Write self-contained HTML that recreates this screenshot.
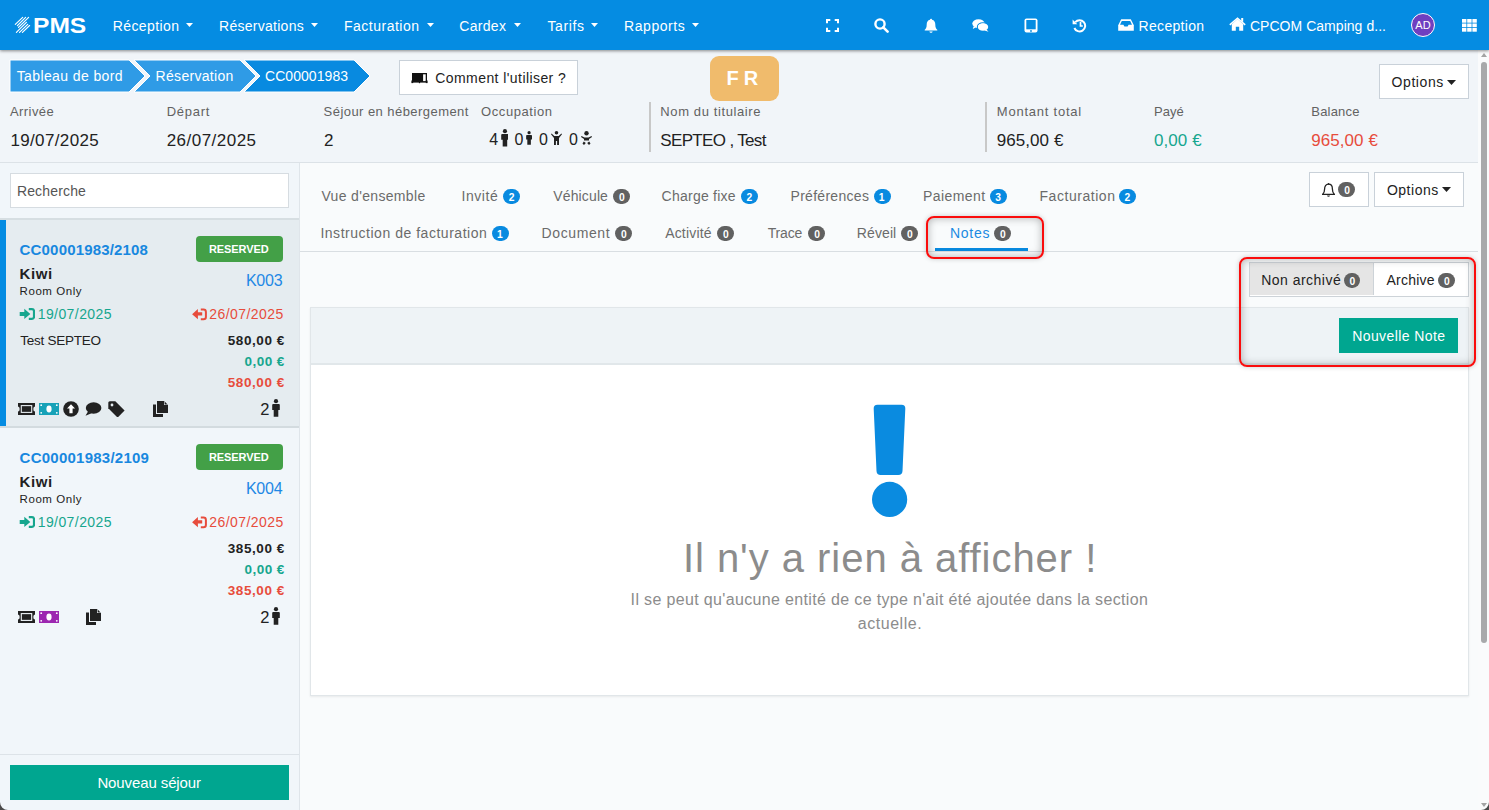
<!DOCTYPE html>
<html><head><meta charset="utf-8"><title>PMS</title>
<style>
html,body{margin:0;padding:0;}
body{width:1489px;height:810px;overflow:hidden;position:relative;background:#f1f5f9;font-family:"Liberation Sans", sans-serif;}
.t{position:absolute;white-space:nowrap;line-height:100px;z-index:4;}
svg{display:block;}
</style></head><body>
<div style="position:absolute;left:0px;top:50px;width:1478px;height:113px;background:#f1f5f9;"></div>
<div style="position:absolute;left:0px;top:162px;width:1478px;height:1px;background:#dce2e7;"></div>
<div style="position:absolute;left:0px;top:163px;width:299px;height:647px;background:#f1f6fa;"></div>
<div style="position:absolute;left:299px;top:163px;width:1px;height:647px;background:#dfe5ea;"></div>
<div style="position:absolute;left:300px;top:163px;width:1178px;height:647px;background:#f9fbfc;"></div>
<div style="position:absolute;left:1478px;top:50px;width:11px;height:760px;background:#fafbfc;"></div>
<div style="position:absolute;left:1481px;top:62px;width:6px;height:581px;background:#a8a9ab;border-radius:3px;"></div>
<svg style="position:absolute;left:1480px;top:52px;" width="8" height="6" viewBox="0 0 8 6"><path d="M1 5 L4 1 L7 5 Z" fill="#a3a3a3"/></svg>
<svg style="position:absolute;left:1480px;top:802px;" width="8" height="6" viewBox="0 0 8 6"><path d="M1 1 L4 5 L7 1 Z" fill="#a3a3a3"/></svg>
<div style="position:absolute;left:0px;top:0px;width:1489px;height:50px;background:#058ce2;box-shadow:0 1px 3px rgba(0,0,0,.45);z-index:2;"></div>
<svg style="position:absolute;left:14px;top:16px;z-index:3;" width="17" height="18" viewBox="0 0 17 18"><g stroke="#fff" stroke-width="1.15" stroke-linecap="round" fill="none"><path d="M1.30 8.40 L8.70 1.30"/><path d="M3.40 9.60 L11.60 1.30"/><path d="M4.50 11.40 L14.60 1.30"/><path d="M2.40 16.40 L12.40 6.40"/><path d="M5.50 16.40 L13.70 8.40"/><path d="M8.40 16.40 L15.60 9.50"/></g></svg>
<div class="t" style="left:32.98px;top:-24.10px;font-size:22px;color:#fff;font-weight:700;letter-spacing:0px;transform:scaleX(1.1174);transform-origin:0 0;">PMS</div>
<div class="t" style="left:112.70px;top:-24.20px;font-size:14px;color:#fff;font-weight:400;letter-spacing:0.412px;">Réception</div>
<svg style="position:absolute;left:185.5px;top:23px;z-index:3;" width="7" height="4" viewBox="0 0 7 4"><path d="M0 0 L7 0 L3.5 4 Z" fill="#fff"/></svg>
<div class="t" style="left:219.00px;top:-24.20px;font-size:14px;color:#fff;font-weight:400;letter-spacing:0.273px;">Réservations</div>
<svg style="position:absolute;left:310.8px;top:23px;z-index:3;" width="7" height="4" viewBox="0 0 7 4"><path d="M0 0 L7 0 L3.5 4 Z" fill="#fff"/></svg>
<div class="t" style="left:344.00px;top:-24.20px;font-size:14px;color:#fff;font-weight:400;letter-spacing:0.5px;">Facturation</div>
<svg style="position:absolute;left:426.5px;top:23px;z-index:3;" width="7" height="4" viewBox="0 0 7 4"><path d="M0 0 L7 0 L3.5 4 Z" fill="#fff"/></svg>
<div class="t" style="left:459.30px;top:-24.20px;font-size:14px;color:#fff;font-weight:400;letter-spacing:0.3px;">Cardex</div>
<svg style="position:absolute;left:513.5px;top:23px;z-index:3;" width="7" height="4" viewBox="0 0 7 4"><path d="M0 0 L7 0 L3.5 4 Z" fill="#fff"/></svg>
<div class="t" style="left:547.40px;top:-24.20px;font-size:14px;color:#fff;font-weight:400;letter-spacing:0.64px;">Tarifs</div>
<svg style="position:absolute;left:591.4px;top:23px;z-index:3;" width="7" height="4" viewBox="0 0 7 4"><path d="M0 0 L7 0 L3.5 4 Z" fill="#fff"/></svg>
<div class="t" style="left:624.00px;top:-24.20px;font-size:14px;color:#fff;font-weight:400;letter-spacing:0.571px;">Rapports</div>
<svg style="position:absolute;left:692px;top:23px;z-index:3;" width="7" height="4" viewBox="0 0 7 4"><path d="M0 0 L7 0 L3.5 4 Z" fill="#fff"/></svg>
<svg style="position:absolute;left:826px;top:19px;z-index:3;" width="13" height="13" viewBox="0 0 13 13"><path d="M1 4.3V1H4.3M8.7 1H12V4.3M12 8.7V12H8.7M4.3 12H1V8.7" stroke="#fff" stroke-width="2" fill="none"/></svg>
<svg style="position:absolute;left:874px;top:18px;z-index:3;" width="15" height="15" viewBox="0 0 15 15"><circle cx="6" cy="6" r="4.6" stroke="#fff" stroke-width="2.4" fill="none"/><path d="M9.3 9.3 L13.6 13.6" stroke="#fff" stroke-width="2.6" stroke-linecap="round"/></svg>
<svg style="position:absolute;left:924px;top:18px;z-index:3;" width="14" height="15" viewBox="0 0 14 15"><path d="M7 0.8C7.6 0.8 8 1.2 8 1.7C10.3 2.2 11.3 4 11.3 6.5C11.3 9.5 12 10.6 13.3 11.8V12.6H0.7V11.8C2 10.6 2.7 9.5 2.7 6.5C2.7 4 3.7 2.2 6 1.7C6 1.2 6.4 0.8 7 0.8Z" fill="#fff"/><path d="M5.3 13.4H8.7C8.5 14.3 7.8 14.8 7 14.8C6.2 14.8 5.5 14.3 5.3 13.4Z" fill="#fff"/></svg>
<svg style="position:absolute;left:972px;top:19px;z-index:3;" width="17" height="13" viewBox="0 0 17 13"><ellipse cx="6.5" cy="4.6" rx="6.2" ry="4.4" fill="#fff"/><path d="M1.5 7.5 L0.8 10 L4 8.3Z" fill="#fff"/><ellipse cx="11" cy="8" rx="5.6" ry="4.1" fill="none" stroke="#058ce2" stroke-width="1.2"/><ellipse cx="11" cy="8" rx="5.2" ry="3.8" fill="#fff"/><path d="M14.5 10.5 L16.5 12.8 L12.5 11.6Z" fill="#fff"/></svg>
<svg style="position:absolute;left:1024px;top:18px;z-index:3;" width="14" height="15" viewBox="0 0 14 15"><rect x="0.5" y="0.5" width="13" height="14" rx="2" fill="#fff"/><rect x="2.3" y="2" width="9.4" height="9.3" fill="#058ce2"/><circle cx="7" cy="13" r="0.9" fill="#058ce2"/></svg>
<svg style="position:absolute;left:1072px;top:18px;z-index:3;" width="15" height="15" viewBox="0 0 15 15"><path d="M3.3 4.2 A5.6 5.6 0 1 1 2.4 10" stroke="#fff" stroke-width="2" fill="none"/><path d="M0.6 1.5 L0.6 6.2 L5.3 6.2Z" fill="#fff"/><path d="M8.5 4 V8 H10.8" stroke="#fff" stroke-width="1.7" fill="none"/></svg>
<svg style="position:absolute;left:1118px;top:19px;z-index:3;" width="16" height="12" viewBox="0 0 16 12"><path d="M3.2 0.3H12.8L15.8 6.3V11.7H0.2V6.3Z" fill="#fff"/><path d="M3.8 1.9H12.2L14 5.8H10.6L9.6 7.6H6.4L5.4 5.8H2Z" fill="#058ce2"/></svg>
<div class="t" style="left:1138.60px;top:-24.20px;font-size:14px;color:#fff;font-weight:400;letter-spacing:0.3px;">Reception</div>
<svg style="position:absolute;left:1229px;top:17px;z-index:3;" width="17" height="14" viewBox="0 0 17 14"><path d="M8.5 2 L14.2 7.2 V13.8 H10.2 V9.8 H6.8 V13.8 H2.8 V7.2Z" fill="#fff"/><path d="M0.8 7.8 L8.5 1.2 L16.2 7.8" stroke="#fff" stroke-width="1.6" fill="none"/><rect x="12.2" y="1" width="2" height="3.8" fill="#fff"/></svg>
<div class="t" style="left:1249.90px;top:-24.10px;font-size:14px;color:#fff;font-weight:400;letter-spacing:0.041px;">CPCOM Camping d...</div>
<div style="position:absolute;z-index:3;left:1411px;top:13px;width:22px;height:22px;border:1.5px solid #fff;border-radius:50%;background:#6f3fc0;color:#fff;font-size:11px;line-height:22px;text-align:center;">AD</div>
<svg style="position:absolute;left:1462px;top:19px;z-index:3;" width="15" height="13" viewBox="0 0 15 13"><rect x="0.0" y="0.0" width="4.4" height="3.7" fill="#fff"/><rect x="5.2" y="0.0" width="4.4" height="3.7" fill="#fff"/><rect x="10.4" y="0.0" width="4.4" height="3.7" fill="#fff"/><rect x="0.0" y="4.5" width="4.4" height="3.7" fill="#fff"/><rect x="5.2" y="4.5" width="4.4" height="3.7" fill="#fff"/><rect x="10.4" y="4.5" width="4.4" height="3.7" fill="#fff"/><rect x="0.0" y="9.0" width="4.4" height="3.7" fill="#fff"/><rect x="5.2" y="9.0" width="4.4" height="3.7" fill="#fff"/><rect x="10.4" y="9.0" width="4.4" height="3.7" fill="#fff"/></svg>
<svg style="position:absolute;left:8px;top:58px;" width="366" height="36" viewBox="0 0 366 36"><g transform="translate(-8,-58)"><path d="M10 60 H129 L145 76 L129 92 H10 Z" fill="#2f9be6" stroke="#fff" stroke-width="1"/><path d="M134 60 H240 L256 76 L240 92 H134 L150 76 Z" fill="#2f9be6" stroke="#fff" stroke-width="1"/><path d="M244 60 H354 L370 76 L354 92 H244 L260 76 Z" fill="#088ae0" stroke="#fff" stroke-width="1"/></g></svg>
<div class="t" style="left:16.70px;top:26.10px;font-size:14px;color:#fff;font-weight:400;letter-spacing:0.393px;">Tableau de bord</div>
<div class="t" style="left:155.60px;top:26.10px;font-size:14px;color:#fff;font-weight:400;letter-spacing:0.3px;">Réservation</div>
<div class="t" style="left:265.00px;top:26.10px;font-size:14px;color:#fff;font-weight:400;letter-spacing:0.056px;">CC00001983</div>
<div style="position:absolute;left:399px;top:60px;width:177px;height:33px;background:#fff;border:1px solid #c9d1d9;"></div>
<svg style="position:absolute;left:411px;top:72px;" width="17" height="12" viewBox="0 0 17 12"><rect x="1" y="1" width="15" height="9.6" fill="#111"/><rect x="12.1" y="2.3" width="2.6" height="6.8" fill="#fff"/><rect x="0.4" y="8.5" width="1.8" height="2.6" fill="#111"/><rect x="14.8" y="8.5" width="1.8" height="2.6" fill="#111"/><rect x="7.9" y="10" width="1.2" height="1.2" fill="#111"/></svg>
<div class="t" style="left:435.30px;top:27.60px;font-size:14px;color:#222;font-weight:400;letter-spacing:0.421px;">Comment l'utiliser ?</div>
<div style="position:absolute;left:710px;top:56px;width:69px;height:45px;background:#f0bb6c;border-radius:9px;"></div>
<div class="t" style="left:726.40px;top:28.00px;font-size:20px;color:#fff;font-weight:700;letter-spacing:0px;">F</div>
<div class="t" style="left:743.70px;top:28.00px;font-size:20px;color:#fff;font-weight:700;letter-spacing:0px;">R</div>
<div style="position:absolute;left:1379px;top:64px;width:88px;height:33px;background:#fff;border:1px solid #c9d1d9;"></div>
<div class="t" style="left:1391.60px;top:32.00px;font-size:14px;color:#222;font-weight:400;letter-spacing:0.567px;">Options</div>
<svg style="position:absolute;left:1447px;top:80px;" width="9" height="5" viewBox="0 0 9 5"><path d="M0 0H9L4.5 5Z" fill="#222"/></svg>
<div class="t" style="left:10.00px;top:62.00px;font-size:13px;color:#626262;font-weight:400;letter-spacing:0.417px;">Arrivée</div>
<div class="t" style="left:166.70px;top:62.00px;font-size:13px;color:#626262;font-weight:400;letter-spacing:0.74px;">Départ</div>
<div class="t" style="left:323.60px;top:62.00px;font-size:13px;color:#626262;font-weight:400;letter-spacing:0.445px;">Séjour en hébergement</div>
<div class="t" style="left:481.10px;top:62.00px;font-size:13px;color:#626262;font-weight:400;letter-spacing:0.578px;">Occupation</div>
<div class="t" style="left:660.30px;top:62.00px;font-size:13px;color:#626262;font-weight:400;letter-spacing:0.613px;">Nom du titulaire</div>
<div class="t" style="left:996.80px;top:62.00px;font-size:13px;color:#626262;font-weight:400;letter-spacing:0.775px;">Montant total</div>
<div class="t" style="left:1153.90px;top:62.00px;font-size:13px;color:#626262;font-weight:400;letter-spacing:0.067px;">Payé</div>
<div class="t" style="left:1311.30px;top:62.00px;font-size:13px;color:#626262;font-weight:400;letter-spacing:0.183px;">Balance</div>
<div class="t" style="left:10.40px;top:91.00px;font-size:17px;color:#222;font-weight:400;letter-spacing:0.367px;">19/07/2025</div>
<div class="t" style="left:166.70px;top:91.00px;font-size:17px;color:#222;font-weight:400;letter-spacing:0.478px;">26/07/2025</div>
<div class="t" style="left:324.00px;top:91.00px;font-size:17px;color:#222;font-weight:400;letter-spacing:0px;">2</div>
<div class="t" style="left:660.30px;top:91.00px;font-size:17px;color:#222;font-weight:400;letter-spacing:-0.658px;">SEPTEO , Test</div>
<div class="t" style="left:996.80px;top:91.00px;font-size:17px;color:#222;font-weight:400;letter-spacing:0.057px;">965,00 €</div>
<div class="t" style="left:1153.90px;top:91.00px;font-size:17px;color:#16a68e;font-weight:400;letter-spacing:0.1px;">0,00 €</div>
<div class="t" style="left:1311.30px;top:91.00px;font-size:17px;color:#e74c3c;font-weight:400;letter-spacing:0.057px;">965,00 €</div>
<div style="position:absolute;left:649px;top:102px;width:2px;height:50px;background:#c8c8c8;"></div>
<div style="position:absolute;left:985px;top:102px;width:2px;height:50px;background:#c8c8c8;"></div>
<div class="t" style="left:489.30px;top:89.60px;font-size:16px;color:#222;font-weight:400;letter-spacing:0px;">4</div>
<div class="t" style="left:514.50px;top:89.60px;font-size:16px;color:#222;font-weight:400;letter-spacing:0px;">0</div>
<div class="t" style="left:539.00px;top:89.60px;font-size:16px;color:#222;font-weight:400;letter-spacing:0px;">0</div>
<div class="t" style="left:569.00px;top:89.60px;font-size:16px;color:#222;font-weight:400;letter-spacing:0px;">0</div>
<svg style="position:absolute;left:500.6px;top:129.3px" width="7.9" height="17.7" viewBox="0 0 8 18"><circle cx="4" cy="2.2" r="2.1" fill="#222"/><path d="M1.2 5 H6.8 Q7.8 5 7.8 6 V11 H6.3 V17.8 H1.7 V11 H0.2 V6 Q0.2 5 1.2 5Z" fill="#222"/></svg>
<svg style="position:absolute;left:526px;top:131px" width="6.2" height="14" viewBox="0 0 8 18"><circle cx="4" cy="2.2" r="2.1" fill="#222"/><path d="M1.2 5 H6.8 Q7.8 5 7.8 6 V11 H6.3 V17.8 H1.7 V11 H0.2 V6 Q0.2 5 1.2 5Z" fill="#222"/></svg>
<svg style="position:absolute;left:551px;top:131px;" width="11" height="14" viewBox="0 0 11 14"><circle cx="5.5" cy="1.8" r="1.8" fill="#222"/><path d="M0.6 2.5 L3.3 5 H7.7 L10.4 2.5 L11 3.3 L8 7 V14 H6.1 V10 H4.9 V14 H3 V7 L0 3.3Z" fill="#222"/></svg>
<svg style="position:absolute;left:581px;top:131px;" width="11" height="14" viewBox="0 0 11 14"><circle cx="5.5" cy="2.2" r="2.2" fill="#222"/><path d="M0.5 5 L3.5 6.5 H7.5 L10.5 5 L11 6 L8 8 V9.5 H3 V8 L0 6Z" fill="#222"/><path d="M2.8 10.5 L1.5 12.5 L3 14 L4.8 12Z M8.2 10.5 L9.5 12.5 L8 14 L6.2 12Z" fill="#222"/></svg>
<div style="position:absolute;left:10px;top:173px;width:277px;height:33px;background:#fff;border:1px solid #d6dce1;"></div>
<div class="t" style="left:16.90px;top:141.00px;font-size:14px;color:#555;font-weight:400;letter-spacing:0.163px;">Recherche</div>
<div style="position:absolute;left:0px;top:218px;width:299px;height:2px;background:#d6dee2;"></div>
<div style="position:absolute;left:0px;top:220px;width:299px;height:206px;background:#e5ecf0;"></div>
<div style="position:absolute;left:0px;top:220px;width:6px;height:206px;background:#058ce2;"></div>
<div style="position:absolute;left:0px;top:426px;width:299px;height:2px;background:#d3dbdf;"></div>
<div class="t" style="left:19.60px;top:199.70px;font-size:15px;color:#1888df;font-weight:700;letter-spacing:0.171px;">CC00001983/2108</div>
<div style="position:absolute;left:196px;top:236px;width:87px;height:26px;background:#43a047;border-radius:4px;"></div>
<div class="t" style="left:209.00px;top:198.80px;font-size:11px;color:#fff;font-weight:700;letter-spacing:-0.086px;">RESERVED</div>
<div class="t" style="left:19.60px;top:223.80px;font-size:15px;color:#222;font-weight:700;letter-spacing:0.567px;">Kiwi</div>
<div class="t" style="left:245.90px;top:230.60px;font-size:16px;color:#1e88e5;font-weight:400;letter-spacing:-0.2px;">K003</div>
<div class="t" style="left:19.60px;top:240.50px;font-size:11.5px;color:#222;font-weight:400;letter-spacing:0.55px;">Room Only</div>
<svg style="position:absolute;left:19px;top:308px;" width="16" height="12" viewBox="0 0 16 12"><path d="M0.7 3.9 H5.3 V0.8 L11.3 5.9 L5.3 10.9 V7.9 H0.7Z" fill="#16a68e"/><path d="M9.8 1.2 H13 Q15 1.2 15 3.2 V8.8 Q15 10.8 13 10.8 H9.8" stroke="#16a68e" stroke-width="2.2" fill="none"/></svg>
<div class="t" style="left:37.70px;top:263.80px;font-size:14px;color:#16a68e;font-weight:400;letter-spacing:0.422px;">19/07/2025</div>
<svg style="position:absolute;left:191px;top:308px;" width="16" height="13" viewBox="0 0 16 13"><path d="M1.1 6.2 L6.9 1.1 V4.3 H11.2 V7.6 H6.9 V11.3Z" fill="#e74c3c"/><path d="M9.8 1.6 H12.5 Q14.9 1.6 14.9 4 V9 Q14.9 11.2 12.5 11.2 H9.8" stroke="#e74c3c" stroke-width="2" fill="none"/></svg>
<div class="t" style="left:209.30px;top:264.00px;font-size:14px;color:#e74c3c;font-weight:400;letter-spacing:0.433px;">26/07/2025</div>
<div class="t" style="left:20.30px;top:290.60px;font-size:13.5px;color:#222;font-weight:400;letter-spacing:-0.26px;">Test SEPTEO</div>
<div class="t" style="left:227.70px;top:290.90px;font-size:13.5px;color:#222;font-weight:700;letter-spacing:0.586px;">580,00 €</div>
<div class="t" style="left:244.50px;top:311.70px;font-size:13.5px;color:#16a68e;font-weight:700;letter-spacing:0.46px;">0,00 €</div>
<div class="t" style="left:227.70px;top:332.80px;font-size:13.5px;color:#e74c3c;font-weight:700;letter-spacing:0.586px;">580,00 €</div>
<div class="t" style="left:260.30px;top:359.00px;font-size:16.5px;color:#222;font-weight:400;letter-spacing:0px;">2</div>
<svg style="position:absolute;left:272.1px;top:399px" width="8.0" height="18" viewBox="0 0 8 18"><circle cx="4" cy="2.2" r="2.1" fill="#222"/><path d="M1.2 5 H6.8 Q7.8 5 7.8 6 V11 H6.3 V17.8 H1.7 V11 H0.2 V6 Q0.2 5 1.2 5Z" fill="#222"/></svg>
<svg style="position:absolute;left:17px;top:403px;" width="19" height="12" viewBox="0 0 19 12"><path d="M1 0 H18 V3.5 Q16.3 3.5 16.3 6 Q16.3 8.5 18 8.5 V12 H1 V8.5 Q2.7 8.5 2.7 6 Q2.7 3.5 1 3.5Z" fill="#222"/><rect x="4.3" y="2.6" width="10.4" height="6.8" fill="none" stroke="#e5ecf0" stroke-width="1.1"/></svg>
<svg style="position:absolute;left:38.8px;top:403px;" width="20" height="12" viewBox="0 0 20 12"><rect x="0" y="0" width="20" height="12" fill="#17a2b8"/><ellipse cx="10" cy="6" rx="2.6" ry="3.4" fill="#fff"/><circle cx="2.2" cy="2.2" r="0.9" fill="#fff"/><circle cx="17.8" cy="2.2" r="0.9" fill="#fff"/><circle cx="2.2" cy="9.8" r="0.9" fill="#fff"/><circle cx="17.8" cy="9.8" r="0.9" fill="#fff"/></svg>
<svg style="position:absolute;left:63px;top:401px;" width="16" height="16" viewBox="0 0 16 16"><circle cx="8" cy="8" r="7.8" fill="#222"/><path d="M8 3.2 L12 7.4 H9.6 V12.3 H6.4 V7.4 H4Z" fill="#fff"/></svg>
<svg style="position:absolute;left:85px;top:402px;" width="16.5" height="14" viewBox="0 0 16.5 14"><ellipse cx="8.6" cy="6" rx="7.8" ry="5.8" fill="#222"/><path d="M3 9.5 L0.5 13.8 L6.5 11.3Z" fill="#222"/></svg>
<svg style="position:absolute;left:107.6px;top:400.8px;" width="17" height="16" viewBox="0 0 17 16"><path d="M0.3 1.8 Q0.3 0.3 1.8 0.3 H7.3 L16.6 9.6 L9.6 16.6 L0.3 7.3Z" fill="#222"/><circle cx="4" cy="4" r="1.4" fill="#e5ecf0"/></svg>
<svg style="position:absolute;left:153.3px;top:401px;" width="15" height="16" viewBox="0 0 15 16"><path d="M0 3.5 H3 V13 H10 V16 H0Z" fill="#222"/><path d="M4 0 H11 L15 4 V12 H4Z" fill="#222"/><path d="M11 0 V4 H15Z" fill="#e5ecf0"/><path d="M11.6 0.6 L14.4 3.4 H11.6Z" fill="#222"/></svg>
<div class="t" style="left:19.60px;top:407.70px;font-size:15px;color:#1888df;font-weight:700;letter-spacing:0.243px;">CC00001983/2109</div>
<div style="position:absolute;left:196px;top:444px;width:87px;height:26px;background:#43a047;border-radius:4px;"></div>
<div class="t" style="left:209.00px;top:406.80px;font-size:11px;color:#fff;font-weight:700;letter-spacing:-0.086px;">RESERVED</div>
<div class="t" style="left:19.60px;top:431.80px;font-size:15px;color:#222;font-weight:700;letter-spacing:0.567px;">Kiwi</div>
<div class="t" style="left:245.90px;top:438.60px;font-size:16px;color:#1e88e5;font-weight:400;letter-spacing:-0.2px;">K004</div>
<div class="t" style="left:19.60px;top:448.50px;font-size:11.5px;color:#222;font-weight:400;letter-spacing:0.55px;">Room Only</div>
<svg style="position:absolute;left:19px;top:516px;" width="16" height="12" viewBox="0 0 16 12"><path d="M0.7 3.9 H5.3 V0.8 L11.3 5.9 L5.3 10.9 V7.9 H0.7Z" fill="#16a68e"/><path d="M9.8 1.2 H13 Q15 1.2 15 3.2 V8.8 Q15 10.8 13 10.8 H9.8" stroke="#16a68e" stroke-width="2.2" fill="none"/></svg>
<div class="t" style="left:37.70px;top:471.80px;font-size:14px;color:#16a68e;font-weight:400;letter-spacing:0.422px;">19/07/2025</div>
<svg style="position:absolute;left:191px;top:516px;" width="16" height="13" viewBox="0 0 16 13"><path d="M1.1 6.2 L6.9 1.1 V4.3 H11.2 V7.6 H6.9 V11.3Z" fill="#e74c3c"/><path d="M9.8 1.6 H12.5 Q14.9 1.6 14.9 4 V9 Q14.9 11.2 12.5 11.2 H9.8" stroke="#e74c3c" stroke-width="2" fill="none"/></svg>
<div class="t" style="left:209.30px;top:472.00px;font-size:14px;color:#e74c3c;font-weight:400;letter-spacing:0.433px;">26/07/2025</div>
<div class="t" style="left:227.70px;top:498.90px;font-size:13.5px;color:#222;font-weight:700;letter-spacing:0.586px;">385,00 €</div>
<div class="t" style="left:244.50px;top:519.70px;font-size:13.5px;color:#16a68e;font-weight:700;letter-spacing:0.46px;">0,00 €</div>
<div class="t" style="left:227.70px;top:540.80px;font-size:13.5px;color:#e74c3c;font-weight:700;letter-spacing:0.586px;">385,00 €</div>
<div class="t" style="left:260.30px;top:567.00px;font-size:16.5px;color:#222;font-weight:400;letter-spacing:0px;">2</div>
<svg style="position:absolute;left:272.1px;top:607px" width="8.0" height="18" viewBox="0 0 8 18"><circle cx="4" cy="2.2" r="2.1" fill="#222"/><path d="M1.2 5 H6.8 Q7.8 5 7.8 6 V11 H6.3 V17.8 H1.7 V11 H0.2 V6 Q0.2 5 1.2 5Z" fill="#222"/></svg>
<svg style="position:absolute;left:17px;top:611px;" width="19" height="12" viewBox="0 0 19 12"><path d="M1 0 H18 V3.5 Q16.3 3.5 16.3 6 Q16.3 8.5 18 8.5 V12 H1 V8.5 Q2.7 8.5 2.7 6 Q2.7 3.5 1 3.5Z" fill="#222"/><rect x="4.3" y="2.6" width="10.4" height="6.8" fill="none" stroke="#f1f6fa" stroke-width="1.1"/></svg>
<svg style="position:absolute;left:38.8px;top:611px;" width="20" height="12" viewBox="0 0 20 12"><rect x="0" y="0" width="20" height="12" fill="#9c27b0"/><ellipse cx="10" cy="6" rx="2.6" ry="3.4" fill="#fff"/><circle cx="2.2" cy="2.2" r="0.9" fill="#fff"/><circle cx="17.8" cy="2.2" r="0.9" fill="#fff"/><circle cx="2.2" cy="9.8" r="0.9" fill="#fff"/><circle cx="17.8" cy="9.8" r="0.9" fill="#fff"/></svg>
<svg style="position:absolute;left:86.2px;top:609px;" width="15" height="16" viewBox="0 0 15 16"><path d="M0 3.5 H3 V13 H10 V16 H0Z" fill="#222"/><path d="M4 0 H11 L15 4 V12 H4Z" fill="#222"/><path d="M11 0 V4 H15Z" fill="#f1f6fa"/><path d="M11.6 0.6 L14.4 3.4 H11.6Z" fill="#222"/></svg>
<div style="position:absolute;left:0px;top:754px;width:299px;height:1px;background:#dde3e8;"></div>
<div style="position:absolute;left:10px;top:765px;width:279px;height:35px;background:#00a690;"></div>
<div class="t" style="left:97.40px;top:733.30px;font-size:15px;color:#fff;font-weight:400;letter-spacing:-0.108px;">Nouveau séjour</div>
<div style="position:absolute;left:300px;top:251px;width:1178px;height:1px;background:#d9dee2;"></div>
<div class="t" style="left:321.40px;top:146.20px;font-size:14px;color:#6b6b6b;font-weight:400;letter-spacing:0.338px;">Vue d'ensemble</div>
<div class="t" style="left:461.50px;top:146.20px;font-size:14px;color:#6b6b6b;font-weight:400;letter-spacing:0.54px;">Invité</div>
<div style="position:absolute;left:503.2px;top:189px;width:16.8px;height:14.8px;background:#088ae0;border-radius:7.4px;"></div>
<div class="t" style="left:508.70px;top:147.90px;font-size:10.3px;color:#fff;font-weight:700;letter-spacing:0px;">2</div>
<div class="t" style="left:553.30px;top:146.20px;font-size:14px;color:#6b6b6b;font-weight:400;letter-spacing:0.129px;">Véhicule</div>
<div style="position:absolute;left:613.1px;top:189px;width:16.8px;height:14.8px;background:#616161;border-radius:7.4px;"></div>
<div class="t" style="left:619.10px;top:147.90px;font-size:10.3px;color:#fff;font-weight:700;letter-spacing:0px;">0</div>
<div class="t" style="left:661.60px;top:146.20px;font-size:14px;color:#6b6b6b;font-weight:400;letter-spacing:0.24px;">Charge fixe</div>
<div style="position:absolute;left:741px;top:189px;width:16.8px;height:14.8px;background:#088ae0;border-radius:7.4px;"></div>
<div class="t" style="left:746.50px;top:147.90px;font-size:10.3px;color:#fff;font-weight:700;letter-spacing:0px;">2</div>
<div class="t" style="left:790.50px;top:146.20px;font-size:14px;color:#6b6b6b;font-weight:400;letter-spacing:0.29px;">Préférences</div>
<div style="position:absolute;left:873.8px;top:189px;width:16.8px;height:14.8px;background:#088ae0;border-radius:7.4px;"></div>
<div class="t" style="left:878.80px;top:147.90px;font-size:10.3px;color:#fff;font-weight:700;letter-spacing:0px;">1</div>
<div class="t" style="left:923.00px;top:146.20px;font-size:14px;color:#6b6b6b;font-weight:400;letter-spacing:0.429px;">Paiement</div>
<div style="position:absolute;left:989.8px;top:189px;width:16.8px;height:14.8px;background:#088ae0;border-radius:7.4px;"></div>
<div class="t" style="left:995.30px;top:147.90px;font-size:10.3px;color:#fff;font-weight:700;letter-spacing:0px;">3</div>
<div class="t" style="left:1039.50px;top:146.20px;font-size:14px;color:#6b6b6b;font-weight:400;letter-spacing:0.54px;">Facturation</div>
<div style="position:absolute;left:1119.1px;top:189px;width:16.8px;height:14.8px;background:#088ae0;border-radius:7.4px;"></div>
<div class="t" style="left:1124.60px;top:147.90px;font-size:10.3px;color:#fff;font-weight:700;letter-spacing:0px;">2</div>
<div class="t" style="left:320.40px;top:183.20px;font-size:14px;color:#6b6b6b;font-weight:400;letter-spacing:0.524px;">Instruction de facturation</div>
<div style="position:absolute;left:492px;top:226px;width:16.8px;height:14.8px;background:#088ae0;border-radius:7.4px;"></div>
<div class="t" style="left:497.00px;top:184.90px;font-size:10.3px;color:#fff;font-weight:700;letter-spacing:0px;">1</div>
<div class="t" style="left:541.60px;top:183.20px;font-size:14px;color:#6b6b6b;font-weight:400;letter-spacing:0.6px;">Document</div>
<div style="position:absolute;left:615px;top:226px;width:16.8px;height:14.8px;background:#616161;border-radius:7.4px;"></div>
<div class="t" style="left:621.00px;top:184.90px;font-size:10.3px;color:#fff;font-weight:700;letter-spacing:0px;">0</div>
<div class="t" style="left:665.20px;top:183.20px;font-size:14px;color:#6b6b6b;font-weight:400;letter-spacing:0.171px;">Activité</div>
<div style="position:absolute;left:716.9px;top:226px;width:16.8px;height:14.8px;background:#616161;border-radius:7.4px;"></div>
<div class="t" style="left:722.90px;top:184.90px;font-size:10.3px;color:#fff;font-weight:700;letter-spacing:0px;">0</div>
<div class="t" style="left:767.70px;top:183.20px;font-size:14px;color:#6b6b6b;font-weight:400;letter-spacing:-0.175px;">Trace</div>
<div style="position:absolute;left:808.3px;top:226px;width:16.8px;height:14.8px;background:#616161;border-radius:7.4px;"></div>
<div class="t" style="left:814.30px;top:184.90px;font-size:10.3px;color:#fff;font-weight:700;letter-spacing:0px;">0</div>
<div class="t" style="left:856.80px;top:183.20px;font-size:14px;color:#6b6b6b;font-weight:400;letter-spacing:0.1px;">Réveil</div>
<div style="position:absolute;left:901px;top:226px;width:16.8px;height:14.8px;background:#616161;border-radius:7.4px;"></div>
<div class="t" style="left:907.00px;top:184.90px;font-size:10.3px;color:#fff;font-weight:700;letter-spacing:0px;">0</div>
<div class="t" style="left:949.90px;top:183.20px;font-size:14px;color:#1a8ae2;font-weight:400;letter-spacing:0.775px;">Notes</div>
<div style="position:absolute;left:994px;top:226px;width:16.8px;height:14.8px;background:#616161;border-radius:7.4px;"></div>
<div class="t" style="left:1000.00px;top:184.90px;font-size:10.3px;color:#fff;font-weight:700;letter-spacing:0px;">0</div>
<div style="position:absolute;left:935px;top:248px;width:93px;height:3px;background:#088ae0;"></div>
<div style="position:absolute;left:1309px;top:172px;width:58px;height:33px;background:#fff;border:1px solid #c9d1d9;"></div>
<svg style="position:absolute;left:1322px;top:183px;" width="13" height="14" viewBox="0 0 13 14"><path d="M6.5 1.2 C9.2 1.2 10.4 3.3 10.4 6 C10.4 9 11 10.2 12.3 11.3 H0.7 C2 10.2 2.6 9 2.6 6 C2.6 3.3 3.8 1.2 6.5 1.2Z" fill="none" stroke="#222" stroke-width="1.3"/><path d="M5 12.4 H8 Q7.8 13.8 6.5 13.8 Q5.2 13.8 5 12.4Z" fill="#222"/><circle cx="6.5" cy="0.9" r="0.8" fill="#222"/></svg>
<div style="position:absolute;left:1338.3px;top:182px;width:16.8px;height:14.8px;background:#616161;border-radius:7.4px;"></div>
<div class="t" style="left:1344.30px;top:140.90px;font-size:10.3px;color:#fff;font-weight:700;letter-spacing:0px;">0</div>
<div style="position:absolute;left:1374px;top:172px;width:88px;height:33px;background:#fff;border:1px solid #c9d1d9;"></div>
<div class="t" style="left:1386.90px;top:139.60px;font-size:14px;color:#222;font-weight:400;letter-spacing:0.517px;">Options</div>
<svg style="position:absolute;left:1442.3px;top:187px;" width="9" height="5" viewBox="0 0 9 5"><path d="M0 0H9L4.5 5Z" fill="#222"/></svg>
<div style="position:absolute;left:1249px;top:262px;width:220px;height:35px;background:#fff;border:1px solid #cdd3d8;box-sizing:border-box;"></div>
<div style="position:absolute;left:1250px;top:263px;width:123px;height:32px;background:#e5e5e5;"></div>
<div style="position:absolute;left:1373px;top:263px;width:1px;height:32px;background:#cdd3d8;"></div>
<div class="t" style="left:1261.20px;top:229.80px;font-size:14px;color:#222;font-weight:400;letter-spacing:0.48px;">Non archivé</div>
<div style="position:absolute;left:1343.5px;top:273px;width:16.8px;height:14.8px;background:#616161;border-radius:7.4px;"></div>
<div class="t" style="left:1349.50px;top:231.90px;font-size:10.3px;color:#fff;font-weight:700;letter-spacing:0px;">0</div>
<div class="t" style="left:1386.50px;top:229.80px;font-size:14px;color:#222;font-weight:400;letter-spacing:0.233px;">Archive</div>
<div style="position:absolute;left:1437.9px;top:273px;width:16.8px;height:14.8px;background:#616161;border-radius:7.4px;"></div>
<div class="t" style="left:1443.90px;top:231.90px;font-size:10.3px;color:#fff;font-weight:700;letter-spacing:0px;">0</div>
<div style="position:absolute;left:310px;top:307px;width:1159px;height:389px;background:#fff;border:1px solid #e1e6e9;box-sizing:border-box;box-shadow:0 1px 2px rgba(0,0,0,.07);"></div>
<div style="position:absolute;left:311px;top:308px;width:1157px;height:55px;background:#eef3f6;border-bottom:2px solid #e1e7ea;"></div>
<div style="position:absolute;left:1339px;top:318px;width:119px;height:35px;background:#00a690;"></div>
<div class="t" style="left:1352.20px;top:285.80px;font-size:14px;color:#fff;font-weight:400;letter-spacing:0.417px;">Nouvelle Note</div>
<svg style="position:absolute;left:872px;top:404px;" width="36" height="114" viewBox="0 0 36 114"><path d="M5.5 0.7 H29.5 Q33.5 0.7 33.3 4.7 L30.5 67 Q30.3 71 26.3 71 H8.7 Q4.7 71 4.5 67 L1.7 4.7 Q1.5 0.7 5.5 0.7Z" fill="#0a8be0"/><circle cx="17.6" cy="95.4" r="17.6" fill="#0a8be0"/></svg>
<div class="t" style="left:682.90px;top:508.30px;font-size:40px;color:#8c8c8c;font-weight:400;letter-spacing:0.964px;">Il n'y a rien à afficher !</div>
<div class="t" style="left:630.60px;top:549.80px;font-size:16px;color:#8c8c8c;font-weight:400;letter-spacing:0.346px;">Il se peut qu'aucune entité de ce type n'ait été ajoutée dans la section</div>
<div class="t" style="left:857.80px;top:573.70px;font-size:16px;color:#8c8c8c;font-weight:400;letter-spacing:0.525px;">actuelle.</div>
<div style="position:absolute;left:926.4px;top:216.1px;width:117.2px;height:42.9px;box-sizing:border-box;border:2.7px solid #fa0c0c;border-radius:8px;box-shadow:0 0 5px rgba(0,0,0,.2), inset 0 0 8px rgba(0,0,0,.3);z-index:5;"></div>
<div style="position:absolute;left:1239.4px;top:257.2px;width:236.2px;height:110.2px;box-sizing:border-box;border:2.7px solid #fa0c0c;border-radius:8px;box-shadow:0 0 5px rgba(0,0,0,.2), inset 0 0 8px rgba(0,0,0,.3);z-index:5;"></div>
<svg style="position:absolute;left:0px;top:802px;z-index:6;" width="8" height="8" viewBox="0 0 8 8"><path d="M0 0 V8 H8 A8 8 0 0 1 0 0Z" fill="#4a4a4a"/></svg>
<svg style="position:absolute;left:1481px;top:802px;z-index:6;" width="8" height="8" viewBox="0 0 8 8"><path d="M8 0 V8 H0 A8 8 0 0 0 8 0Z" fill="#4a4a4a"/></svg>
</body></html>
